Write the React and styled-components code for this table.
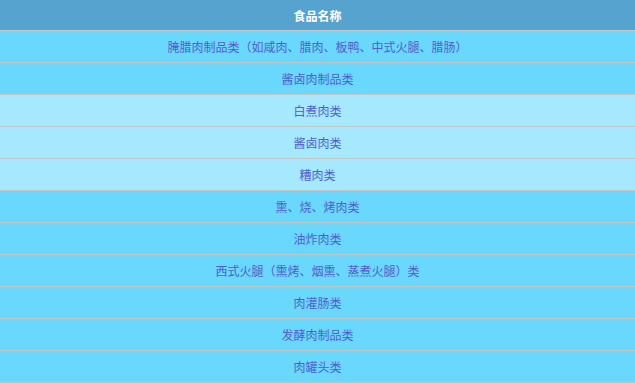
import React from "react";
import styled, { createGlobalStyle } from "styled-components";

const GlobalStyle = createGlobalStyle`
    html, body {
        margin: 0;
        padding: 0;
        background: #ffffff;
    }
    body {
        font-family: "Noto Sans CJK SC", "Liberation Sans", sans-serif;
    }
`;

const Table = styled.div`
    width: 635px;
    display: flex;
    flex-direction: column;
`;

const HeaderCell = styled.div`
    height: 30px;
    display: flex;
    align-items: center;
    justify-content: center;
    background-color: #56a3cf;
    color: #ffffff;
    font-size: 12px;
    font-weight: bold;
    border-bottom: 1px solid #c4c4c4;
`;

const Row = styled.div`
    height: 31px;
    display: flex;
    align-items: center;
    justify-content: center;
    background-color: ${(p) => (p.$light ? "#a6e8fe" : "#6ad7fd")};
    color: #4f5fcb;
    font-size: 12px;
    border-bottom: 1px solid #c4c4c4;
`;

const foods = [
    { name: "腌腊肉制品类（如咸肉、腊肉、板鸭、中式火腿、腊肠）" },
    { name: "酱卤肉制品类" },
    { name: "白煮肉类", light: true },
    { name: "酱卤肉类", light: true },
    { name: "糟肉类", light: true },
    { name: "熏、烧、烤肉类" },
    { name: "油炸肉类" },
    { name: "西式火腿（熏烤、烟熏、蒸煮火腿）类" },
    { name: "肉灌肠类" },
    { name: "发酵肉制品类" },
    { name: "肉罐头类" },
];

export default function App() {
    return (
        <>
            <GlobalStyle />
            <Table>
                <HeaderCell>食品名称</HeaderCell>
                {foods.map((f) => (
                    <Row key={f.name} $light={f.light}>
                        {f.name}
                    </Row>
                ))}
            </Table>
        </>
    );
}
